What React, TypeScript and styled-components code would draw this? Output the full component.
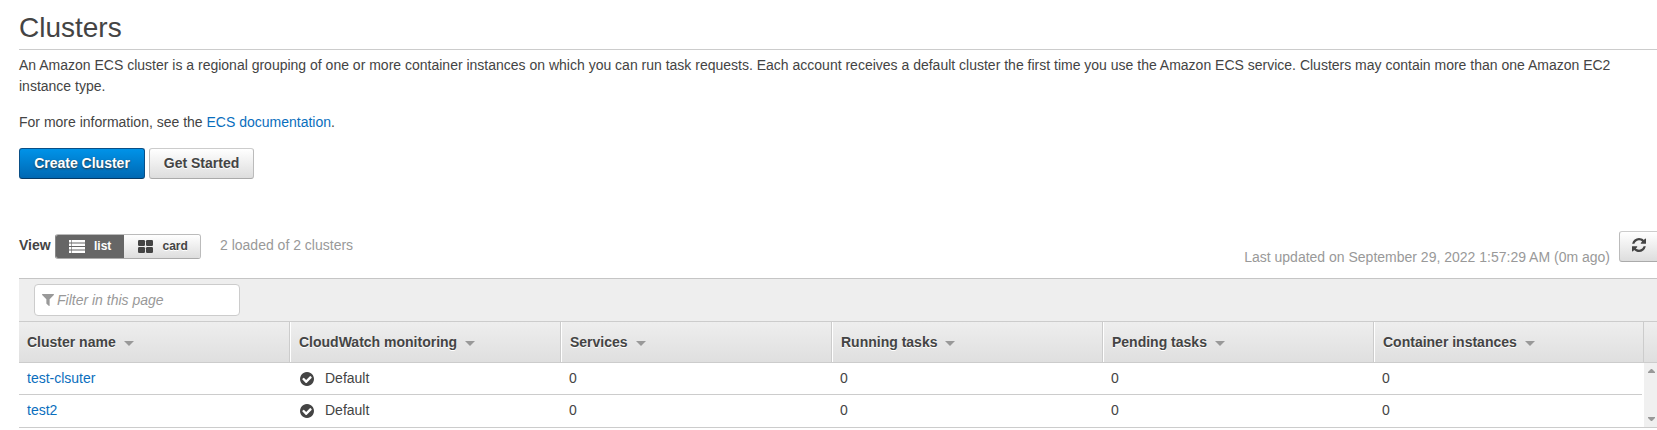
import React from "react";
import styled, { createGlobalStyle } from "styled-components";

const GlobalStyle = createGlobalStyle`
  * { box-sizing: border-box; }
  body {
    margin: 0;
    background: #fff;
    color: #444;
    font: 14px/21px "Liberation Sans", Arial, sans-serif;
    overflow: hidden;
  }
`;

const Page = styled.main`
  width: 1657px;
  height: 430px;
  padding: 9px 0 0 19px;
  overflow: hidden;
`;

const Title = styled.h1`
  margin: 0 0 5px;
  height: 41px;
  font-size: 28px;
  line-height: 37px;
  font-weight: 400;
  border-bottom: 1px solid #ccc;
`;

const Paragraph = styled.p`
  margin: 0 0 15px;
  max-width: 1620px;
`;

const Link = styled.a`
  color: #0a6ebd;
  text-decoration: none;
`;

const Actions = styled.div`
  display: flex;
  gap: 4px;
  margin-bottom: 52px;
`;

const Button = styled.button<{ $primary?: boolean }>`
  width: ${(p) => (p.$primary ? 126 : 105)}px;
  height: 31px;
  padding: 0 0 1px;
  font: bold 14px/28px "Liberation Sans", Arial, sans-serif;
  border: 1px solid;
  border-radius: 3px;
  border-color: ${(p) => (p.$primary ? "#0a4f86 #0a4f86 #063a66" : "#ccc #bbb #aaa")};
  color: ${(p) => (p.$primary ? "#fff" : "#444")};
  background: ${(p) =>
    p.$primary
      ? "linear-gradient(#0093e8, #0068b3)"
      : "linear-gradient(#fff, #ddd)"};
  text-shadow: ${(p) => (p.$primary ? "0 1px 2px #333" : "0 1px 0 #fff")};
`;

const Toolbar = styled.div`
  display: flex;
  align-items: flex-start;
  height: 47px;
`;

const ViewLabel = styled.strong`
  width: 36px;
  padding-top: 4px;
`;

const Toggle = styled.div`
  display: flex;
  width: 146px;
  height: 25px;
  margin: 3px 19px 0 0;
  border: 1px solid #bbb;
  border-bottom-color: #aaa;
  border-left-color: #888;
  border-radius: 3px;
  overflow: hidden;
`;

const ToggleOption = styled.button<{ $active?: boolean }>`
  display: flex;
  align-items: center;
  width: ${(p) => (p.$active ? 68 : 76)}px;
  height: 23px;
  padding: 0 0 0 ${(p) => (p.$active ? 13 : 14)}px;
  gap: ${(p) => (p.$active ? 9 : 9.5)}px;
  border: 0;
  color: ${(p) => (p.$active ? "#fff" : "#444")};
  background: ${(p) => (p.$active ? "#666" : "linear-gradient(#fff, #ddd)")};
  font: bold 12px/21px "Liberation Sans", Arial, sans-serif;
  text-shadow: ${(p) => (p.$active ? "none" : "0 1px 0 #fff")};
`;

const Muted = styled.span<{ $drop: number }>`
  padding-top: ${(p) => p.$drop}px;
  color: #999;
`;

const Updated = styled.div`
  display: flex;
  align-items: flex-start;
  gap: 9px;
  margin-left: auto;
`;

const RefreshButton = styled.button`
  width: 38px;
  height: 31px;
  padding: 0 0 4px 12px;
  text-align: left;
  border: 1px solid;
  border-color: #ccc #bbb #aaa;
  border-right: 0;
  border-radius: 3px 0 0 3px;
  background: linear-gradient(#fff, #ddd);

  svg { display: block; }
`;

const Grid = styled.section`
  border-top: 1px solid #c5c5c5;
`;

const FilterBar = styled.div`
  height: 43px;
  padding: 5px 15px;
  background: #eee;
  border-bottom: 1px solid #ccc;
`;

const FilterField = styled.div`
  display: flex;
  align-items: center;
  gap: 3px;
  width: 206px;
  height: 32px;
  padding: 0 7px;
  color: #999;
  font-style: italic;
  background: #fff;
  border: 1px solid #ccc;
  border-radius: 4px;
`;

const HeaderRow = styled.div`
  display: grid;
  grid-template-columns: repeat(5, 271px) 270px 13px;
  height: 41px;
  background: linear-gradient(#eee, #dfdfdf);
  border-bottom: 1px solid #ccc;
`;

const HeaderCell = styled.div`
  display: flex;
  align-items: center;
  gap: 8px;
  padding-left: 8px;
  font-weight: bold;
  text-shadow: 0 1px 0 #fff;
  border-right: 1px solid #ccc;

  & + & {
    border-left: 1px solid #fff;
  }
`;

const Caret = styled.i`
  margin-top: 3px;
  border: 5px solid transparent;
  border-top-color: #999;
  border-bottom: 0;
`;

const Body = styled.div`
  display: flex;
  justify-content: space-between;
  height: 65px;
  border-bottom: 1px solid #ccc;
`;

const Rows = styled.div`
  width: 1623px;
`;

const Row = styled.div`
  display: grid;
  grid-template-columns: repeat(6, 271px);
  height: 32px;

  &:not(:last-child) {
    border-bottom: 1px solid #ccc;
  }
`;

const Cell = styled.div`
  display: flex;
  align-items: center;
  gap: 11px;
  height: 30px;
  padding-left: 8px;

  svg { margin: 1px 0 0 2px; }
`;

const Scrollbar = styled.div`
  display: flex;
  flex-direction: column;
  justify-content: space-between;
  width: 13px;
  padding: 6px 0 6px 4px;
  background: #f0f0f0;
`;

const ICONS = {
  refresh:
    "M1639 1056q0 5-1 7-64 268-268 434.5t-478 166.5q-146 0-282.5-55t-243.5-157l-129 129q-19 19-45 19t-45-19-19-45v-448q0-26 19-45t45-19h448q26 0 45 19t19 45-19 45l-137 137q71 66 161 102t187 36q134 0 250-65t186-179q11-17 53-117 8-23 30-23h192q13 0 22.5 9.5t9.5 22.5zm25-800v448q0 26-19 45t-45 19h-448q-26 0-45-19t-19-45 19-45l138-138q-148-137-349-137-134 0-250 65t-186 179q-11 17-53 117-8 23-30 23h-199q-13 0-22.5-9.5t-9.5-22.5v-7q65-268 270-434.5t480-166.5q146 0 284 55.5t245 156.5l130-129q19-19 45-19t45 19 19 45z",
  check:
    "M1412 734q0-28-18-46l-91-90q-19-19-45-19t-45 19l-408 407-226-226q-19-19-45-19t-45 19l-91 90q-18 18-18 46 0 27 18 45l362 362q19 19 45 19 27 0 46-19l543-543q18-18 18-45zm252 162q0 209-103 385.5t-279.5 279.5-385.5 103-385.5-103-279.5-279.5-103-385.5 103-385.5 279.5-279.5 385.5-103 385.5 103 279.5 279.5 103 385.5z",
  filter:
    "M1595 295q17 41-14 70l-493 493v742q0 42-39 59-13 5-25 5-27 0-45-19l-256-256q-19-19-19-45v-486l-493-493q-31-29-14-70 17-39 59-39h1280q42 0 59 39z",
};

const Glyph = ({ name, color = "#444", box = "128 128 1536 1536", w = 14, h = 14 }: {
  name: keyof typeof ICONS; color?: string; box?: string; w?: number; h?: number;
}) => (
  <svg width={w} height={h} viewBox={box} fill={color}>
    <path d={ICONS[name]} />
  </svg>
);

const ListIcon = () => (
  <svg width="16" height="13" fill="#fff">
    {[0, 3.5, 7, 10.5].map((y) => (
      <React.Fragment key={y}>
        <rect x="0" y={y} width="2.4" height="2.5" />
        <rect x="3" y={y} width="13" height="2.5" />
      </React.Fragment>
    ))}
  </svg>
);

const CardIcon = () => (
  <svg width="15" height="13" fill="#444">
    {[0, 8].map((x) =>
      [0, 7].map((y) => <rect key={`${x}-${y}`} x={x} y={y} width="7" height="6" rx="1.3" />)
    )}
  </svg>
);

const COLUMNS = [
  "Cluster name",
  "CloudWatch monitoring",
  "Services",
  "Running tasks",
  "Pending tasks",
  "Container instances",
];

const CLUSTERS = [
  { name: "test-clsuter", monitoring: "Default", counts: [0, 0, 0, 0] },
  { name: "test2", monitoring: "Default", counts: [0, 0, 0, 0] },
];

export default function App() {
  return (
    <Page>
      <GlobalStyle />
      <Title>Clusters</Title>
      <Paragraph>
        An Amazon ECS cluster is a regional grouping of one or more container instances on which you can run
        task requests. Each account receives a default cluster the first time you use the Amazon ECS service.
        Clusters may contain more than one Amazon EC2 instance type.
      </Paragraph>
      <Paragraph>
        For more information, see the <Link>ECS documentation</Link>.
      </Paragraph>
      <Actions>
        <Button $primary>Create Cluster</Button>
        <Button>Get Started</Button>
      </Actions>
      <Toolbar>
        <ViewLabel>View</ViewLabel>
        <Toggle>
          <ToggleOption $active><ListIcon />list</ToggleOption>
          <ToggleOption><CardIcon />card</ToggleOption>
        </Toggle>
        <Muted $drop={4}>2 loaded of 2 clusters</Muted>
        <Updated>
          <Muted $drop={16}>Last updated on September 29, 2022 1:57:29 AM (0m ago)</Muted>
          <RefreshButton aria-label="Refresh"><Glyph name="refresh" /></RefreshButton>
        </Updated>
      </Toolbar>
      <Grid>
        <FilterBar>
          <FilterField>
            <Glyph name="filter" color="#999" box="190 256 1412 1408" w={12} h={12} />
            Filter in this page
          </FilterField>
        </FilterBar>
        <HeaderRow>
          {COLUMNS.map((label) => (
            <HeaderCell key={label}>{label}<Caret /></HeaderCell>
          ))}
        </HeaderRow>
        <Body>
          <Rows>
            {CLUSTERS.map((c) => (
              <Row key={c.name}>
                <Cell><Link>{c.name}</Link></Cell>
                <Cell><Glyph name="check" />{c.monitoring}</Cell>
                {c.counts.map((n, i) => <Cell key={i}>{n}</Cell>)}
              </Row>
            ))}
          </Rows>
          <Scrollbar>
            <svg width="7" height="4" fill="#999"><path d="M0 4V3L3 0h1l3 3v1z" /></svg>
            <svg width="7" height="4" fill="#999"><path d="M0 0v1l3 3h1l3-3V0z" /></svg>
          </Scrollbar>
        </Body>
      </Grid>
    </Page>
  );
}
